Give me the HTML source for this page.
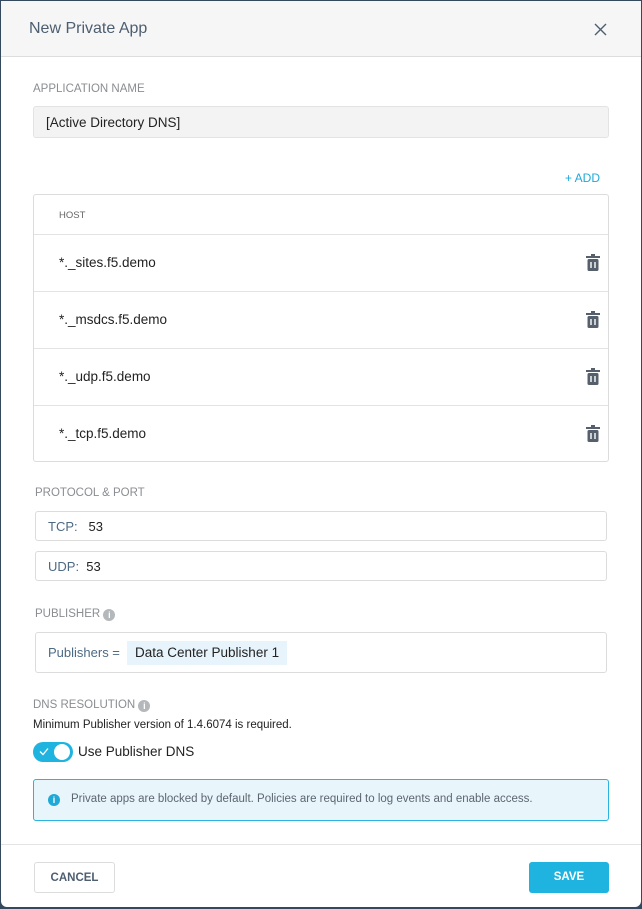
<!DOCTYPE html>
<html><head><style>
*{box-sizing:border-box;margin:0;padding:0}
body{width:642px;height:909px;background:#34495e;font-family:"Liberation Sans",sans-serif;overflow:hidden;position:relative}
.m{position:absolute;left:1px;top:1px;width:640px;height:906px;background:#fff;border-radius:0 0 6px 6px;overflow:hidden}
.hd{position:absolute;left:0;top:0;width:640px;height:56px;background:#f6f6f6;border-bottom:1px solid #ddd}
.a{position:absolute}
.lbl{font-size:11.5px;color:#8a8d91;letter-spacing:0}
.box{border:1px solid #dcdcdc;border-radius:3px;background:#fff}
.row{position:absolute;left:0;width:574px;height:57px;border-top:1px solid #e3e3e3}
.row span{position:absolute;left:25px;top:20px;font-size:13.5px;color:#222}
.tr{position:absolute;right:7px;top:19px}
</style></head><body>
<div class="m">
<div class="hd"><div class="a" style="left:28px;top:19px;font-size:16px;color:#4d5e70">New Private App</div>
<svg class="a" style="left:593px;top:22px" width="13" height="13" viewBox="0 0 13 13"><path d="M1 1L12 12M12 1L1 12" stroke="#4d5e70" stroke-width="1.4"/></svg></div>
<div class="a lbl" style="left:32px;top:82px">APPLICATION NAME</div>
<div class="a" style="left:32px;top:105px;width:576px;height:32px;background:#f3f3f3;border:1px solid #e3e3e3;border-radius:3px;font-size:13.5px;color:#222;padding:8px 12px">[Active Directory DNS]</div>
<div class="a" style="left:564px;top:170px;font-size:12px;color:#1fa9d6">+ ADD</div>
<div class="a box" style="left:32px;top:193px;width:576px;height:268px">
<div class="a" style="left:25px;top:15px;font-size:9.5px;color:#666">HOST</div>
<div class="row" style="top:39px"><span>*._sites.f5.demo</span><svg class="tr" width="16" height="18" viewBox="0 0 16 18"><path d="M1 3h14M6 1h4" stroke="#55606c" stroke-width="2"/><rect x="2.5" y="5" width="11" height="12" rx="1.5" fill="#55606c"/><path d="M6 8v6M10 8v6" stroke="#fff" stroke-width="1.4"/></svg></div>
<div class="row" style="top:96px"><span>*._msdcs.f5.demo</span><svg class="tr" width="16" height="18" viewBox="0 0 16 18"><path d="M1 3h14M6 1h4" stroke="#55606c" stroke-width="2"/><rect x="2.5" y="5" width="11" height="12" rx="1.5" fill="#55606c"/><path d="M6 8v6M10 8v6" stroke="#fff" stroke-width="1.4"/></svg></div>
<div class="row" style="top:153px"><span>*._udp.f5.demo</span><svg class="tr" width="16" height="18" viewBox="0 0 16 18"><path d="M1 3h14M6 1h4" stroke="#55606c" stroke-width="2"/><rect x="2.5" y="5" width="11" height="12" rx="1.5" fill="#55606c"/><path d="M6 8v6M10 8v6" stroke="#fff" stroke-width="1.4"/></svg></div>
<div class="row" style="top:210px"><span>*._tcp.f5.demo</span><svg class="tr" width="16" height="18" viewBox="0 0 16 18"><path d="M1 3h14M6 1h4" stroke="#55606c" stroke-width="2"/><rect x="2.5" y="5" width="11" height="12" rx="1.5" fill="#55606c"/><path d="M6 8v6M10 8v6" stroke="#fff" stroke-width="1.4"/></svg></div>
</div>
<div class="a lbl" style="left:34px;top:486px">PROTOCOL &amp; PORT</div>
<div class="a box" style="left:34px;top:510px;width:572px;height:30px;font-size:13px;padding:7px 12px"><span style="color:#4d6a85">TCP:</span>&nbsp;&nbsp; <span style="color:#222">53</span></div>
<div class="a box" style="left:34px;top:550px;width:572px;height:30px;font-size:13px;padding:7px 12px"><span style="color:#4d6a85">UDP:</span>&nbsp; <span style="color:#222">53</span></div>
<div class="a lbl" style="left:34px;top:607px">PUBLISHER <span style="display:inline-block;width:12px;height:12px;border-radius:50%;background:#b5b8bb;color:#fff;font-size:9px;text-align:center;line-height:12px;font-weight:bold;vertical-align:-1px">i</span></div>
<div class="a box" style="left:34px;top:631px;width:572px;height:41px">
<div class="a" style="left:12px;top:12px;font-size:13px;color:#4d6a85">Publishers =</div>
<div class="a" style="left:91px;top:8px;height:24px;padding:4px 8px;background:#e8f4fb;font-size:13.5px;color:#222">Data Center Publisher 1</div></div>
<div class="a lbl" style="left:32px;top:698px">DNS RESOLUTION <span style="display:inline-block;width:12px;height:12px;border-radius:50%;background:#b5b8bb;color:#fff;font-size:9px;text-align:center;line-height:12px;font-weight:bold;vertical-align:-1px">i</span></div>
<div class="a" style="left:32px;top:718px;font-size:11.5px;color:#222">Minimum Publisher version of 1.4.6074 is required.</div>
<div class="a" style="left:32px;top:741px;width:40px;height:20px;border-radius:10px;background:#1fb3e0"><svg class="a" style="left:6px;top:5px" width="10" height="9"><path d="M1 4.5l3 3 5-6" stroke="#fff" stroke-width="1.3" fill="none"/></svg><div class="a" style="left:21px;top:2px;width:16px;height:16px;border-radius:50%;background:#fff"></div></div>
<div class="a" style="left:77px;top:743px;font-size:13.5px;color:#222">Use Publisher DNS</div>
<div class="a" style="left:32px;top:778px;width:576px;height:42px;background:#e8f5fb;border:1px solid #2bb3e0;border-radius:3px">
<div class="a" style="left:14px;top:14px;width:12px;height:12px;border-radius:50%;background:#1fa9d6;color:#fff;font-size:9px;text-align:center;line-height:12px;font-weight:bold">i</div>
<div class="a" style="left:37px;top:13px;font-size:11.5px;color:#5d6670">Private apps are blocked by default. Policies are required to log events and enable access.</div></div>
<div class="a" style="left:0;top:843px;width:640px;height:1px;background:#e3e3e3"></div>
<div class="a box" style="left:33px;top:861px;width:81px;height:31px;font-size:11.5px;font-weight:bold;color:#4d5e70;text-align:center;line-height:30px">CANCEL</div>
<div class="a" style="left:528px;top:861px;width:80px;height:31px;background:#1fb3e0;border-radius:3px;font-size:11.5px;font-weight:bold;color:#fff;text-align:center;line-height:31px">SAVE</div>
</div>
</body></html>
